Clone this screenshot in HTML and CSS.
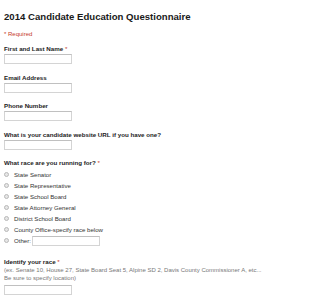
FILE: index.html
```html
<!DOCTYPE html>
<html>
<head>
<meta charset="utf-8">
<link rel="stylesheet" href="styles.css">
</head>
<body>
<div class="form">
  <h1 class="title">2014 Candidate Education Questionnaire</h1>
  <div class="required-note">* Required</div>

  <div class="question">
    <div class="label">First and Last Name <span class="star">*</span></div>
    <div class="input"></div>
  </div>
  <div class="question">
    <div class="label">Email Address</div>
    <div class="input"></div>
  </div>
  <div class="question">
    <div class="label">Phone Number</div>
    <div class="input"></div>
  </div>
  <div class="question">
    <div class="label">What is your candidate website URL if you have one?</div>
    <div class="input"></div>
  </div>

  <div class="question radios-q">
    <div class="label">What race are you running for? <span class="star">*</span></div>
    <div class="options">
      <div class="option"><span class="radio"></span>State Senator</div>
      <div class="option"><span class="radio"></span>State Representative</div>
      <div class="option"><span class="radio"></span>State School Board</div>
      <div class="option"><span class="radio"></span>State Attorney General</div>
      <div class="option"><span class="radio"></span>District School Board</div>
      <div class="option"><span class="radio"></span>County Office-specify race below</div>
      <div class="option"><span class="radio"></span>Other: <span class="input other"></span></div>
    </div>
  </div>

  <div class="question">
    <div class="label">Identify your race <span class="star">*</span></div>
    <div class="help">(ex. Senate 10, House 27, State Board Seat 5, Alpine SD 2, Davis County Commissioner A, etc...<br>Be sure to specify location)</div>
    <div class="input"></div>
  </div>
</div>
</body>
</html>
```

FILE: styles.css
```css
html, body {
  margin: 0;
  padding: 0;
  background: #ffffff;
}

.form {
  padding: 0 4px;
  font-family: "Liberation Sans", Arial, sans-serif;
  color: #222;
}

.title {
  margin: 11px 0 0 0;
  font-size: 9.6px;
  line-height: 11px;
  font-weight: bold;
  color: #1a1a1a;
  white-space: nowrap;
}

.required-note {
  margin-top: 9px;
  font-size: 6px;
  line-height: 7px;
  color: #c53929;
}

.question {
  margin-top: 7px;
}

.question + .question {
  margin-top: 9.5px;
}

.label {
  font-size: 6.2px;
  line-height: 8px;
  font-weight: bold;
  color: #222;
  white-space: nowrap;
}

.star {
  color: #c53929;
  font-weight: normal;
}

.input {
  display: block;
  box-sizing: border-box;
  width: 68px;
  height: 10px;
  margin-top: 1px;
  border: 1px solid #d4d4d4;
  border-top-color: #c0c0c0;
  background: #fff;
}

.options {
  margin-top: 2px;
}

.option {
  display: flex;
  align-items: center;
  height: 11px;
  font-size: 6.1px;
  color: #333;
  white-space: nowrap;
}

.radio {
  box-sizing: border-box;
  width: 5px;
  height: 5px;
  margin: 0 5px 0 0;
  border-radius: 50%;
  border: 1px solid #b8b8b8;
  background: #e6e6e6;
}

.input.other {
  display: inline-block;
  margin: 0 0 0 1px;
}

.radios-q + .question {
  margin-top: 12px;
}

.help {
  font-size: 6px;
  line-height: 8px;
  color: #777;
  white-space: nowrap;
}

.help + .input {
  margin-top: 3px;
}
```
